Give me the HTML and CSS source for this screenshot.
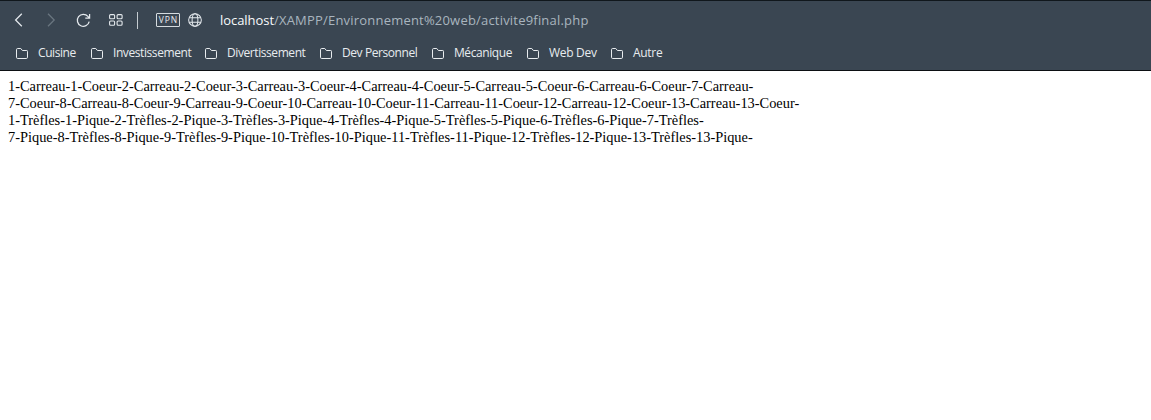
FILE: index.html
```html
<!DOCTYPE html>
<html lang="fr">
<head>
<meta charset="utf-8">
<title>activite9final.php</title>
<link rel="stylesheet" href="styles.css">
</head>
<body>
<svg class="defs" width="0" height="0"><symbol id="folder" viewBox="0 0 13 11"><path d="M.5 1.7Q.5.5 1.7.5H4.8L6.4 2.5H10.8Q11.5 2.5 11.5 3.3V9.2Q11.5 10.5 10.3 10.5H1.7Q.5 10.5 .5 9.3Z" fill="none" stroke="currentColor"/></symbol></svg>
<header class="chrome">
  <nav class="toolbar">
    <svg class="icon back" width="10" height="14" viewBox="0 0 10 14"><path d="M7.8 .8L1.6 7L7.8 13.2"/></svg>
    <svg class="icon forward" width="10" height="14" viewBox="0 0 10 14"><path d="M2 .8L8.2 7L2 13.2"/></svg>
    <svg class="icon reload" width="15" height="15" viewBox="0 0 15 15"><path d="M13.2 8.6A6 6 0 1 1 11.9 3.4L13.4 5M13.6 1V5.2H9.3"/></svg>
    <svg class="icon grid" width="14" height="12" viewBox="0 0 14 12"><rect x=".6" y=".6" width="5" height="4.2" rx="1"/><rect x="8.1" y=".6" width="5" height="4.2" rx="1"/><rect x=".6" y="7" width="5" height="4.2" rx="1"/><rect x="8.1" y="7" width="5" height="4.2" rx="1"/></svg>
    <span class="divider"></span>
    <span class="vpn">VPN</span>
    <svg class="icon globe" width="14" height="14" viewBox="0 0 15 15"><circle cx="7.5" cy="7.5" r="6.8"/><ellipse cx="7.5" cy="7.5" rx="3.1" ry="6.8"/><path d="M1.5 5H13.5M1.5 10H13.5"/></svg>
    <div class="url"><span class="host">localhost</span>/XAMPP/Environnement%20web/activite9final.php</div>
  </nav>
  <nav class="bookmarks">
    <a class="bookmark cuisine"><svg class="folder"><use href="#folder"/></svg><span class="label">Cuisine</span></a>
    <a class="bookmark invest"><svg class="folder"><use href="#folder"/></svg><span class="label">Investissement</span></a>
    <a class="bookmark divert"><svg class="folder"><use href="#folder"/></svg><span class="label">Divertissement</span></a>
    <a class="bookmark perso"><svg class="folder"><use href="#folder"/></svg><span class="label">Dev Personnel</span></a>
    <a class="bookmark meca"><svg class="folder"><use href="#folder"/></svg><span class="label">Mécanique</span></a>
    <a class="bookmark web"><svg class="folder"><use href="#folder"/></svg><span class="label">Web Dev</span></a>
    <a class="bookmark autre"><svg class="folder"><use href="#folder"/></svg><span class="label">Autre</span></a>
  </nav>
</header>
<main class="page">1-Carreau-1-Coeur-2-Carreau-2-Coeur-3-Carreau-3-Coeur-4-Carreau-4-Coeur-5-Carreau-5-Coeur-6-Carreau-6-Coeur-7-Carreau-<br>
7-Coeur-8-Carreau-8-Coeur-9-Carreau-9-Coeur-10-Carreau-10-Coeur-11-Carreau-11-Coeur-12-Carreau-12-Coeur-13-Carreau-13-Coeur-<br>
1-Trèfles-1-Pique-2-Trèfles-2-Pique-3-Trèfles-3-Pique-4-Trèfles-4-Pique-5-Trèfles-5-Pique-6-Trèfles-6-Pique-7-Trèfles-<br>
7-Pique-8-Trèfles-8-Pique-9-Trèfles-9-Pique-10-Trèfles-10-Pique-11-Trèfles-11-Pique-12-Trèfles-12-Pique-13-Trèfles-13-Pique-</main>
</body>
</html>
```
FILE: styles.css
```css
* { box-sizing: border-box; }
body { margin: 0; background: #fff; }
.defs { display: block; }
.chrome { height: 71px; background: #3a4652; border-top: 1px solid #10171c; border-bottom: 1px solid #0c0f13; color: #e8ecef; font-family: "Open Sans", sans-serif; }
.toolbar { display: flex; align-items: center; height: 38px; padding-left: 14px; }
.icon { flex: none; fill: none; stroke: #e4e9ed; stroke-width: 1.25; }
.forward { margin-left: 22px; stroke: #6a7680; }
.reload { margin-left: 20px; }
.grid { margin-left: 18px; stroke-width: 1.1; }
.divider { width: 1px; height: 17px; margin-left: 14px; background: #c5ccd1; }
.vpn { flex: none; width: 24px; height: 14px; margin-left: 18px; border: 1px solid #d5dbdf; border-radius: 1px; font-size: 8.5px; font-weight: 400; line-height: 12px; letter-spacing: .9px; text-align: center; padding-left: 1px; }
.globe { margin-left: 8px; stroke-width: 1.1; }
.url { margin-left: 18px; font-size: 13px; letter-spacing: .2px; color: #a9b5bf; white-space: nowrap; }
.host { color: #f8fafb; letter-spacing: -.05px; }
.bookmarks { display: flex; height: 28px; padding-left: 16px; align-items: center; font-size: 12px; }
.bookmark { display: flex; align-items: center; flex: none; gap: 9px; white-space: nowrap; letter-spacing: -.42px; }
.label { padding-bottom: 2px; }
.folder { flex: none; width: 13px; height: 11px; }
.cuisine { width: 75px; }
.invest { width: 114px; }
.divert { width: 115px; }
.perso { width: 112px; }
.meca { width: 95px; }
.web { width: 84px; letter-spacing: -.3px; }
.autre { letter-spacing: -.3px; }
.page { padding: 7px 8px; font: 14.39px/17px "Liberation Serif", "Times New Roman", serif; white-space: nowrap; color: #000; }
```
